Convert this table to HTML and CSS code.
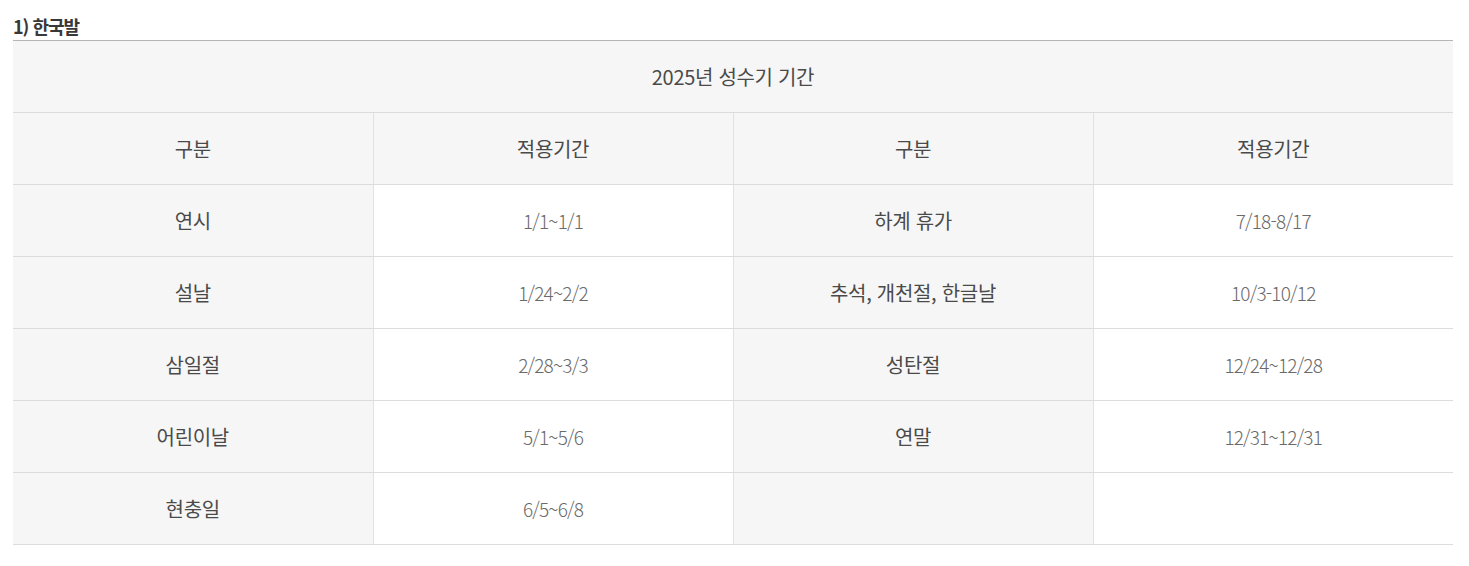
FILE: index.html
```html
<!DOCTYPE html>
<html lang="ko">
<head>
<meta charset="utf-8">
<link rel="stylesheet" href="styles.css">
</head>
<body>
<div class="wrap">
  <h3 class="title">1) 한국발</h3>
  <table class="tbl">
    <colgroup><col><col><col><col></colgroup>
    <thead>
      <tr><th colspan="4" class="cap">2025년 성수기 기간</th></tr>
      <tr><th>구분</th><th>적용기간</th><th>구분</th><th>적용기간</th></tr>
    </thead>
    <tbody>
      <tr><td class="lb">연시</td><td class="val">1/1~1/1</td><td class="lb">하계 휴가</td><td class="val">7/18-8/17</td></tr>
      <tr><td class="lb">설날</td><td class="val">1/24~2/2</td><td class="lb">추석, 개천절, 한글날</td><td class="val">10/3-10/12</td></tr>
      <tr><td class="lb">삼일절</td><td class="val">2/28~3/3</td><td class="lb">성탄절</td><td class="val">12/24~12/28</td></tr>
      <tr><td class="lb">어린이날</td><td class="val">5/1~5/6</td><td class="lb">연말</td><td class="val">12/31~12/31</td></tr>
      <tr><td class="lb">현충일</td><td class="val">6/5~6/8</td><td class="lb"></td><td class="val"></td></tr>
    </tbody>
  </table>
</div>
</body>
</html>
```
FILE: styles.css
```css
html, body {
  margin: 0;
  padding: 0;
  background: #fff;
}
body {
  font-family: "Noto Sans CJK KR", "Noto Sans", sans-serif;
  color: #333;
}
.wrap {
  padding: 14px 16px 0 13px;
}
.title {
  margin: 0;
  font-size: 18px;
  font-weight: 700;
  line-height: 24px;
  color: #383838;
  letter-spacing: -1px;
  height: 26px;
}
.tbl {
  width: 1440px;
  border-collapse: collapse;
  table-layout: fixed;
  border-top: 1px solid #b5b5b5;
}
.tbl th, .tbl td {
  height: 71px;
  padding: 0;
  text-align: center;
  vertical-align: middle;
  border-bottom: 1px solid #dcdcdc;
  font-size: 20px;
  letter-spacing: -0.3px;
}
.tbl th {
  background: #f6f6f6;
  font-weight: 400;
  color: #4a4a4a;
  border-left: 1px solid #e2e2e2;
}
.tbl th:first-child, .tbl td:first-child {
  border-left: none;
}
.tbl th.cap {
  border-left: none;
  height: 71px;
}
.tbl td {
  border-left: 1px solid #e2e2e2;
}
.tbl td.lb {
  background: #f6f6f6;
  color: #4a4a4a;
}
.tbl td.val {
  background: #fff;
  color: #6a6a6a;
  font-size: 19px;
  letter-spacing: -0.8px;
  font-weight: 300;
}
```
